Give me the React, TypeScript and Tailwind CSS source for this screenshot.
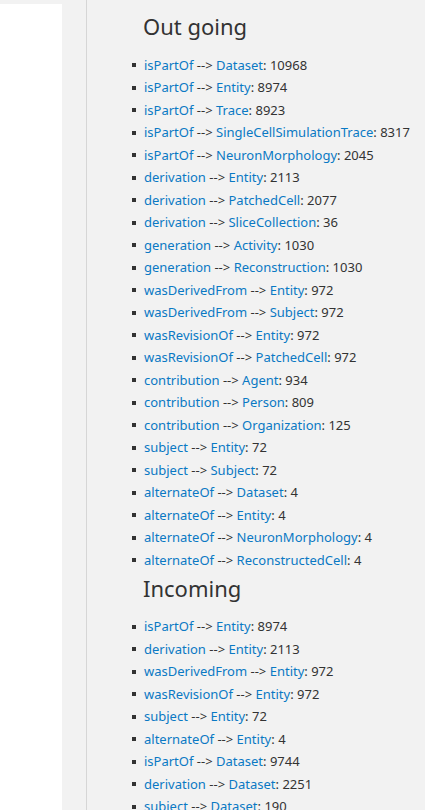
const outgoing: [string, string, number][] = [
  ['isPartOf', 'Dataset', 10968],
  ['isPartOf', 'Entity', 8974],
  ['isPartOf', 'Trace', 8923],
  ['isPartOf', 'SingleCellSimulationTrace', 8317],
  ['isPartOf', 'NeuronMorphology', 2045],
  ['derivation', 'Entity', 2113],
  ['derivation', 'PatchedCell', 2077],
  ['derivation', 'SliceCollection', 36],
  ['generation', 'Activity', 1030],
  ['generation', 'Reconstruction', 1030],
  ['wasDerivedFrom', 'Entity', 972],
  ['wasDerivedFrom', 'Subject', 972],
  ['wasRevisionOf', 'Entity', 972],
  ['wasRevisionOf', 'PatchedCell', 972],
  ['contribution', 'Agent', 934],
  ['contribution', 'Person', 809],
  ['contribution', 'Organization', 125],
  ['subject', 'Entity', 72],
  ['subject', 'Subject', 72],
  ['alternateOf', 'Dataset', 4],
  ['alternateOf', 'Entity', 4],
  ['alternateOf', 'NeuronMorphology', 4],
  ['alternateOf', 'ReconstructedCell', 4],
];

const incoming: [string, string, number][] = [
  ['isPartOf', 'Entity', 8974],
  ['derivation', 'Entity', 2113],
  ['wasDerivedFrom', 'Entity', 972],
  ['wasRevisionOf', 'Entity', 972],
  ['subject', 'Entity', 72],
  ['alternateOf', 'Entity', 4],
  ['isPartOf', 'Dataset', 9744],
  ['derivation', 'Dataset', 2251],
  ['subject', 'Dataset', 190],
];

function RelationList({ items }: { items: [string, string, number][] }) {
  return (
    <ul className="pl-[45px]">
      {items.map(([rel, type, count], i) => (
        <li key={i} className="flex items-center h-[22.5px] whitespace-nowrap">
          <span className="w-[4px] h-[4px] bg-[#333] mr-[8px] shrink-0" />
          <a className="text-[#0a79c4]">{rel}</a>
          <span className="text-[#333]">&nbsp;--&gt;&nbsp;</span>
          <a className="text-[#0a79c4]">{type}</a>
          <span className="text-[#333]">: {count}</span>
        </li>
      ))}
    </ul>
  );
}

export default function App() {
  return (
    <div
      className="flex min-h-[810px] bg-[#f2f2f2] overflow-hidden"
      style={{ fontFamily: '"Noto Sans", sans-serif' }}
    >
      <div className="w-[62px] shrink-0 pt-[4px]">
        <div className="bg-white h-full" />
      </div>
      <div className="w-[24px] shrink-0" />
      <div className="flex-1 border-l border-[#d6d6d6] pt-[12px] text-[13px]">
        <h2 className="pl-[56px] text-[22px] leading-[28px] text-[#333] mb-[14px]">Out going</h2>
        <RelationList items={outgoing} />
        <h2 className="pl-[56px] text-[22px] leading-[28px] text-[#333] mt-[2px] mb-[14px]">Incoming</h2>
        <RelationList items={incoming} />
      </div>
    </div>
  );
}
